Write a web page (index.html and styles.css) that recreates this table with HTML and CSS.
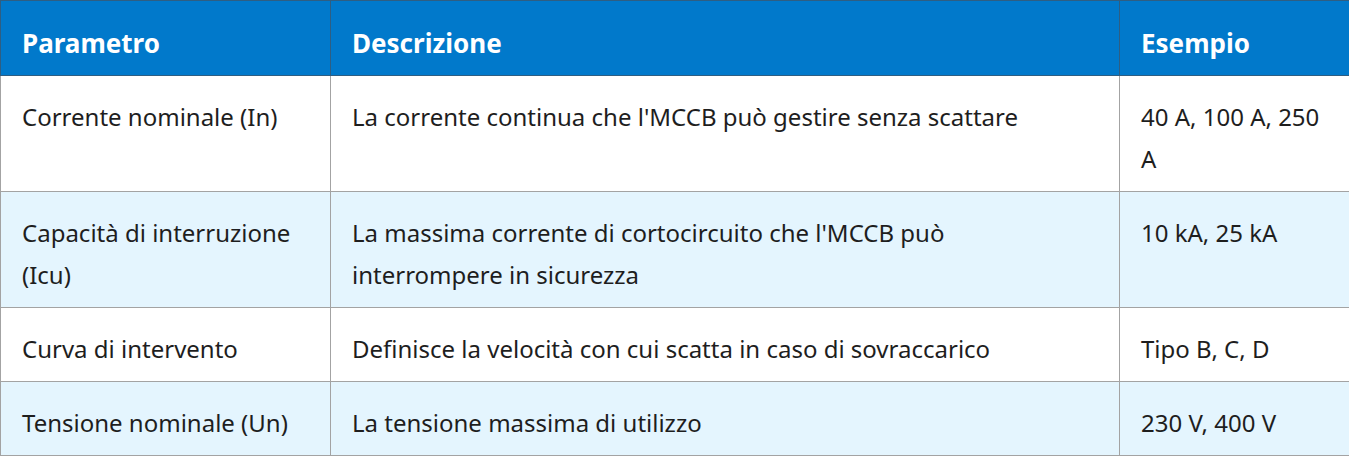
FILE: index.html
```html
<!DOCTYPE html>
<html lang="it">
<head>
<meta charset="utf-8">
<title>Parametri MCCB</title>
<link rel="stylesheet" href="styles.css">
</head>
<body>
<table class="spec-table">
  <colgroup>
    <col class="col-param">
    <col class="col-desc">
    <col class="col-ex">
  </colgroup>
  <thead>
    <tr>
      <th>Parametro</th>
      <th>Descrizione</th>
      <th>Esempio</th>
    </tr>
  </thead>
  <tbody>
    <tr>
      <td>Corrente nominale (In)</td>
      <td>La corrente continua che l'MCCB può gestire senza scattare</td>
      <td>40 A, 100 A, 250 A</td>
    </tr>
    <tr class="alt">
      <td>Capacità di interruzione (Icu)</td>
      <td>La massima corrente di cortocircuito che l'MCCB può interrompere in sicurezza</td>
      <td>10 kA, 25 kA</td>
    </tr>
    <tr>
      <td>Curva di intervento</td>
      <td>Definisce la velocità con cui scatta in caso di sovraccarico</td>
      <td>Tipo B, C, D</td>
    </tr>
    <tr class="alt">
      <td>Tensione nominale (Un)</td>
      <td>La tensione massima di utilizzo</td>
      <td>230 V, 400 V</td>
    </tr>
  </tbody>
</table>
</body>
</html>
```

FILE: styles.css
```css
html, body {
  margin: 0;
  padding: 0;
  background: #ffffff;
}

.spec-table {
  width: 1349px;
  border-collapse: collapse;
  table-layout: fixed;
  font-family: "Noto Sans", "Open Sans", sans-serif;
  font-size: 24px;
  line-height: 42px;
  color: #1e1e1e;
}

.col-param { width: 330px; }
.col-desc { width: 789px; }
.col-ex { width: 230px; }

.spec-table th,
.spec-table td {
  text-align: left;
  vertical-align: top;
  padding: 20px 21px 11px;
  border: 1px solid #a3a3a3;
}

.spec-table th {
  padding-top: 21px;
  background: #0179cb;
  color: #ffffff;
  font-size: 26px;
  font-weight: 700;
  border-color: #2f5e82;
}

.spec-table tbody tr {
  background: #ffffff;
}

.spec-table tbody tr.alt {
  background: #e4f5fe;
}
```
